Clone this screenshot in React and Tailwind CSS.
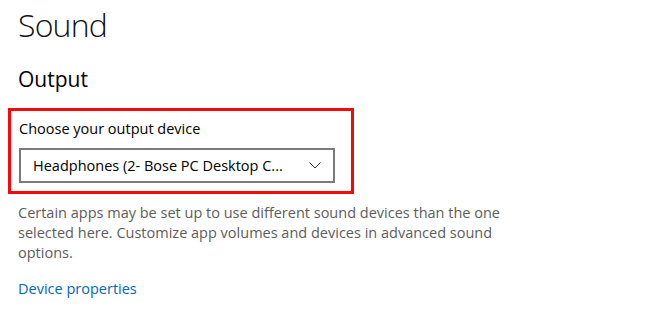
export default function App() {
  return (
    <div className="min-h-screen bg-white px-[18px] font-['Open_Sans',sans-serif] text-black">
      <h1 className="pt-[2px] text-[32px] font-light leading-[46px] tracking-[-0.8px] text-[#111]">Sound</h1>
      <h2 className="mt-[17px] text-[21px] leading-[28px]">Output</h2>
      <div className="-ml-[10px] mt-[15px] w-[346px] border-[3px] border-[#f50a0a] px-[8px] pb-[8px] pt-[7px]">
        <div className="text-[14.5px] leading-[22px]">Choose your output device</div>
        <div className="mt-[8px] flex h-[35px] w-[316px] items-center justify-between border-2 border-[#7a7a7a] pl-[12px] pr-[12px]">
          <span className="text-[14.5px]">Headphones (2- Bose PC Desktop C...</span>
          <svg width="12" height="7" viewBox="0 0 12 7" fill="none" stroke="#333" strokeWidth="1">
            <path d="M0.5 0.5l5.5 5.5 5.5-5.5" />
          </svg>
        </div>
      </div>
      <p className="mt-[9px] w-[500px] text-[14.5px] leading-[20px] text-[#5d5d5d]">
        Certain apps may be set up to use different sound devices than the one selected here. Customize app volumes and devices in advanced sound options.
      </p>
      <a className="mt-[16px] block text-[14.5px] leading-[20px] text-[#0067b8]">Device properties</a>
    </div>
  )
}
